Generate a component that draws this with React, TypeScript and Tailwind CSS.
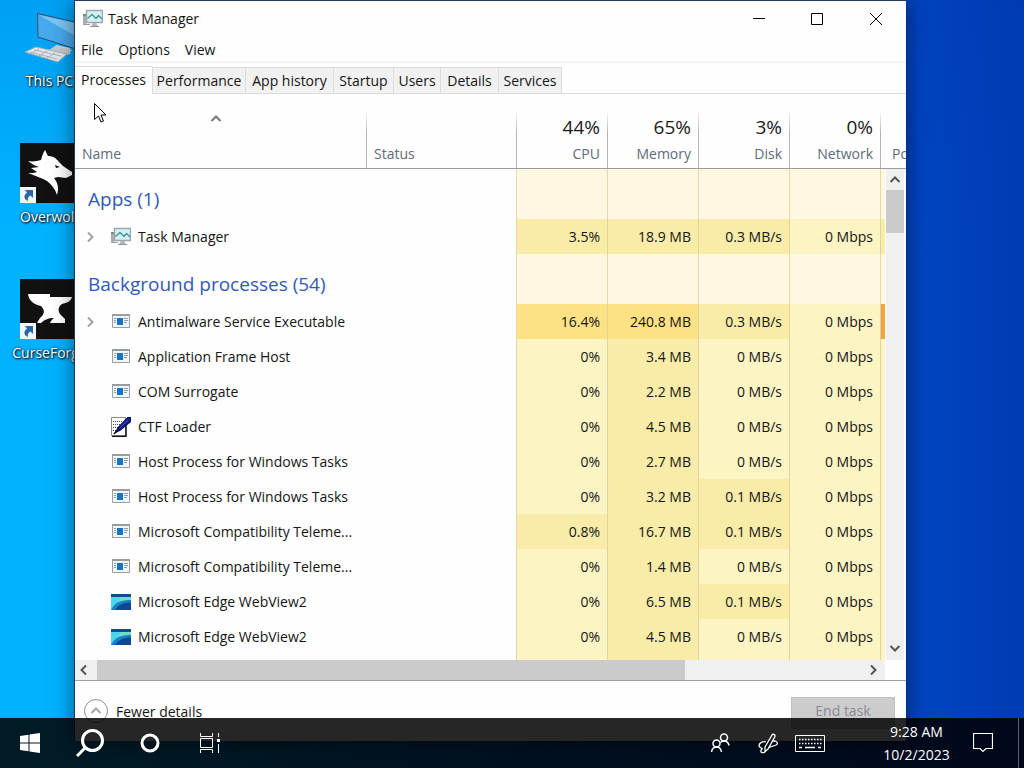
import { useState } from 'react'

type Tone = 'none' | 'low' | 'mid' | 'high' | 'max'
type IconName = 'taskmgr' | 'generic' | 'ctf' | 'edge'

const tones: Record<Tone, string> = {
  none: 'bg-[#fef8e3]',
  low: 'bg-[#fdf4c3]',
  mid: 'bg-[#f8eca8]',
  high: 'bg-[#fde185]',
  max: 'bg-[#f0a63c]',
}

type Process = {
  name: string
  icon: IconName
  expandable?: boolean
  values: [string, string, string, string]
  tones: [Tone, Tone, Tone, Tone, Tone]
}

const apps: Process[] = [
  { name: 'Task Manager', icon: 'taskmgr', expandable: true, values: ['3.5%', '18.9 MB', '0.3 MB/s', '0 Mbps'], tones: ['mid', 'mid', 'mid', 'low', 'mid'] },
]

const background: Process[] = [
  { name: 'Antimalware Service Executable', icon: 'generic', expandable: true, values: ['16.4%', '240.8 MB', '0.3 MB/s', '0 Mbps'], tones: ['high', 'high', 'mid', 'low', 'max'] },
  { name: 'Application Frame Host', icon: 'generic', values: ['0%', '3.4 MB', '0 MB/s', '0 Mbps'], tones: ['low', 'mid', 'low', 'low', 'low'] },
  { name: 'COM Surrogate', icon: 'generic', values: ['0%', '2.2 MB', '0 MB/s', '0 Mbps'], tones: ['low', 'mid', 'low', 'low', 'low'] },
  { name: 'CTF Loader', icon: 'ctf', values: ['0%', '4.5 MB', '0 MB/s', '0 Mbps'], tones: ['low', 'mid', 'low', 'low', 'low'] },
  { name: 'Host Process for Windows Tasks', icon: 'generic', values: ['0%', '2.7 MB', '0 MB/s', '0 Mbps'], tones: ['low', 'mid', 'low', 'low', 'low'] },
  { name: 'Host Process for Windows Tasks', icon: 'generic', values: ['0%', '3.2 MB', '0.1 MB/s', '0 Mbps'], tones: ['low', 'mid', 'mid', 'low', 'low'] },
  { name: 'Microsoft Compatibility Teleme...', icon: 'generic', values: ['0.8%', '16.7 MB', '0.1 MB/s', '0 Mbps'], tones: ['mid', 'mid', 'mid', 'low', 'low'] },
  { name: 'Microsoft Compatibility Teleme...', icon: 'generic', values: ['0%', '1.4 MB', '0 MB/s', '0 Mbps'], tones: ['low', 'mid', 'low', 'low', 'low'] },
  { name: 'Microsoft Edge WebView2', icon: 'edge', values: ['0%', '6.5 MB', '0.1 MB/s', '0 Mbps'], tones: ['low', 'mid', 'mid', 'low', 'low'] },
  { name: 'Microsoft Edge WebView2', icon: 'edge', values: ['0%', '4.5 MB', '0 MB/s', '0 Mbps'], tones: ['low', 'mid', 'low', 'low', 'low'] },
]

const tabs = [
  { label: 'Processes', width: 'w-[78px]' },
  { label: 'Performance', width: 'w-[93px]' },
  { label: 'App history', width: 'w-[88px]' },
  { label: 'Startup', width: 'w-[60px]' },
  { label: 'Users', width: 'w-[47px]' },
  { label: 'Details', width: 'w-[58px]' },
  { label: 'Services', width: 'w-[63px]' },
]

const metrics = [
  { label: 'CPU', total: '44%' },
  { label: 'Memory', total: '65%' },
  { label: 'Disk', total: '3%' },
  { label: 'Network', total: '0%' },
]

function TaskManagerIcon() {
  return (
    <svg width="20" height="20" viewBox="0 0 20 20" className="shrink-0">
      <path d="M0 5h3v11H0z" fill="#a9adb0" />
      <path d="M0 5h3v2H0z" fill="#6f8f78" />
      <path d="M1 15.500h6" stroke="#9a9ea1" />
      <path d="M3.500 1.500h16v12h-16z" fill="#d4f2f5" stroke="#a0a6aa" strokeWidth="1.500" />
      <path d="M4.500 9.500l4.500-4 4 4 2.500-3 3.500 3.500" fill="none" stroke="#3d9799" strokeWidth="1.300" />
      <path d="M9.500 14h4l1 3h-6z" fill="#b4b8ba" />
      <path d="M7 17.500h9" stroke="#8d9194" />
    </svg>
  )
}

function GenericIcon() {
  return (
    <svg width="20" height="20" viewBox="0 0 20 20" className="shrink-0">
      <path d="M1.500 2.500h17v13h-17z" fill="#f1f6fa" stroke="#9a9ea1" />
      <path d="M1 2h18v2H1z" fill="#999da0" />
      <path d="M6 6h6v7H6z" fill="#1673c5" />
      <path d="M3 6.500h2M3 8.500h2M3 10.500h2M13 6.500h4M13 8.500h4M13 10.500h3" stroke="#8e9ca8" />
    </svg>
  )
}

function CtfIcon() {
  return (
    <svg width="20" height="20" viewBox="0 0 20 20" className="shrink-0">
      <path d="M.5.5h14v18H.5z" fill="#fff" stroke="#8a8a8a" />
      <path d="M15 8v11.500H1" fill="none" stroke="#111" strokeWidth="1.500" />
      <path d="M2 4.500h10M2 7.500h9M2 10.500h6M2 13.500h3" stroke="#444" strokeDasharray="1 1" />
      <path d="M17 .500h2.500v4L9 13l-4 2 2-4z" fill="#14208f" stroke="#0b1268" strokeWidth="1.500" />
      <path d="M6 13.500L3 17" stroke="#111" strokeWidth="1.500" />
      <path d="M17 3l-8 7.500" stroke="#3f58cf" />
    </svg>
  )
}

function EdgeIcon() {
  return (
    <svg width="20" height="20" viewBox="0 0 20 20" className="shrink-0">
      <path d="M0 2h20v16H0z" fill="#4ad6ec" />
      <path d="M10 4h10v5c-5-1-9 0-13 2z" fill="#74dcc6" />
      <path d="M0 2h20v3H0z" fill="#0d4f8c" />
      <path d="M0 18C3 11 10 7.500 20 8v10z" fill="#1583c6" />
      <path d="M4 18c3-5 8-7.500 16-7.500V18z" fill="#0e4792" />
    </svg>
  )
}

const icons: Record<IconName, () => React.JSX.Element> = {
  taskmgr: TaskManagerIcon,
  generic: GenericIcon,
  ctf: CtfIcon,
  edge: EdgeIcon,
}

function Chevron({ dir, className = '' }: { dir: 'up' | 'down' | 'left' | 'right'; className?: string }) {
  const d = {
    up: 'M1.500 8l4.500-4.500L10.500 8',
    down: 'M1.500 4l4.500 4.500L10.500 4',
    left: 'M8 1.500L3.500 6 8 10.500',
    right: 'M4 1.500L8.500 6 4 10.500',
  }[dir]
  return (
    <svg width="12" height="12" viewBox="0 0 12 12" fill="none" stroke="currentColor" strokeWidth="2" className={className}>
      <path d={d} />
    </svg>
  )
}

function GroupRow({ label }: { label: string }) {
  return (
    <tr className="h-[50px]">
      <th scope="rowgroup" colSpan={2} className="border-r border-[#e3d9ad] pt-[10px] pb-0 pl-[13px] text-left text-[19px] leading-7 font-normal text-[#3159b8]">
        {label}
      </th>
      {metrics.map(m => (
        <td key={m.label} className={`border-r border-[#e3d9ad] ${tones.none}`} />
      ))}
      <td className={tones.none} />
    </tr>
  )
}

function ProcessRow({ process }: { process: Process }) {
  const Icon = icons[process.icon]
  return (
    <tr className="h-[35px]">
      <td className="p-0">
        <div className="flex items-center pl-[9px]">
          <span className="w-[27px]">
            {process.expandable && (
              <button aria-label={`Expand ${process.name}`} className="block text-[#a3a3a3]">
                <Chevron dir="right" />
              </button>
            )}
          </span>
          <Icon />
          <span className="pl-[7px] whitespace-nowrap">{process.name}</span>
        </div>
      </td>
      <td className="border-r border-[#e3d9ad]" />
      {process.values.map((v, i) => (
        <td key={i} className={`border-r border-[#dfd49c] p-0 pr-[7px] text-right ${tones[process.tones[i]]}`}>{v}</td>
      ))}
      <td className={tones[process.tones[4]]} />
    </tr>
  )
}

function ProcessTable() {
  const divider = 'relative p-0 align-bottom font-normal after:absolute after:right-0 after:bottom-0 after:h-[58px] after:w-px after:bg-linear-to-b after:from-transparent after:to-[#b5b5b5] after:to-40%'
  return (
    <div className="relative overflow-hidden">
      <table className="w-full table-fixed border-separate border-spacing-0">
        <colgroup>
          <col />
          <col className="w-[150px]" />
          <col className="w-[91px]" />
          <col className="w-[91px]" />
          <col className="w-[91px]" />
          <col className="w-[91px]" />
          <col className="w-[25px]" />
        </colgroup>
        <thead>
          <tr className="h-[75px] text-[#5f6b78] [&>th]:border-b [&>th]:border-[#9d9d9d]">
            <th scope="col" className={`${divider} text-left`}>
              <span className="mb-[19px] flex justify-center pr-[10px] text-[#777]"><Chevron dir="up" /></span>
              <span className="block pb-1 pl-[7px] leading-5">Name</span>
            </th>
            <th scope="col" className={`${divider} text-left`}>
              <span className="block pb-1 pl-[7px] leading-5">Status</span>
            </th>
            {metrics.map(m => (
              <th key={m.label} scope="col" className={`${divider} text-right`}>
                <span className="block pr-2 pb-[3px] text-[19px] leading-7 text-[#1b1b1b]">{m.total}</span>
                <span className="block pr-2 pb-1 leading-5">{m.label}</span>
              </th>
            ))}
            <th scope="col" className="overflow-hidden p-0 align-bottom font-normal">
              <span className="block pb-1 pl-[11px] text-left leading-5 whitespace-nowrap">Power usage</span>
            </th>
          </tr>
        </thead>
        <tbody>
          <GroupRow label="Apps (1)" />
          {apps.map((p, i) => <ProcessRow key={i} process={p} />)}
          <GroupRow label="Background processes (54)" />
          {background.map((p, i) => <ProcessRow key={i} process={p} />)}
          {/* top edge of the next row */}
          <tr aria-hidden="true" className="h-[6px]">
            <td colSpan={2} className="border-r border-[#e3d9ad] p-0" />
            {metrics.map((m, i) => (
              <td key={m.label} className={`border-r border-[#dfd49c] p-0 ${i === 1 ? tones.mid : tones.low}`} />
            ))}
            <td className={`p-0 ${tones.low}`} />
          </tr>
        </tbody>
      </table>

      {/* vertical scrollbar */}
      <div className="absolute top-[75px] right-0 bottom-0 flex w-[21px] flex-col border-r-2 border-l border-[#fdfdfd] bg-[#f0f0f0] text-[#555]">
        <button aria-label="Scroll up" className="flex h-[21px] items-center justify-center"><Chevron dir="up" /></button>
        <div className="h-[43px] bg-[#cbcbcb]" />
        <button aria-label="Scroll down" className="mt-auto flex h-[25px] items-center justify-center"><Chevron dir="down" /></button>
      </div>
    </div>
  )
}

function TaskManager() {
  const [tab, setTab] = useState('Processes')
  return (
    <section className="absolute top-0 right-[118px] bottom-[27px] left-[74px] flex flex-col overflow-hidden border-t border-l border-[#22395c] bg-[#fefefe] shadow-[0_2px_20px_rgba(0,0,0,0.5)]">
      <header className="flex h-[36px] shrink-0 items-center pl-2">
        <TaskManagerIcon />
        <h1 className="flex-1 pl-[5px]">Task Manager</h1>
        <button aria-label="Minimize" className="flex h-full w-[58px] items-center justify-center">
          <svg width="12" height="12" stroke="#000"><path d="M0 5.500h12" /></svg>
        </button>
        <button aria-label="Maximize" className="flex h-full w-[58px] items-center justify-center">
          <svg width="12" height="12" fill="none" stroke="#000"><path d="M.5.5h11v11H.5z" /></svg>
        </button>
        <button aria-label="Close" className="flex h-full w-[60px] items-center justify-center">
          <svg width="12" height="12" stroke="#000"><path d="M0 0l12 12M12 0L0 12" /></svg>
        </button>
      </header>
      <nav className="flex h-[26px] shrink-0 items-center gap-[15px] border-b-2 border-[#f4f4f4] pt-[2px] pl-[6px]">
        <button>File</button>
        <button>Options</button>
        <button>View</button>
      </nav>

      <div role="tablist" className="flex h-[31px] shrink-0 items-end border-b border-[#dcdcdc]">
        {tabs.map(t => (
          <button
            key={t.label}
            role="tab"
            aria-selected={t.label === tab}
            onClick={() => setTab(t.label)}
            className={`border-t border-r border-[#dcdcdc] whitespace-nowrap ${t.width} ${t.label === tab ? '-mb-px h-7 bg-[#fefefe] pb-[2px]' : 'h-[26px] bg-[#f1f1f1] pt-px'}`}
          >
            {t.label}
          </button>
        ))}
      </div>

      <ProcessTable />

      {/* horizontal scrollbar */}
      <div className="flex h-[21px] shrink-0 border-b border-[#a0a0a0] pr-[21px] text-[#555]">
        <div className="flex flex-1 bg-[#f0f0f0]">
          <button aria-label="Scroll left" className="flex w-[22px] items-center justify-center pr-1"><Chevron dir="left" /></button>
          <div className="w-3/4 max-w-[588px] bg-[#cbcbcb]" />
          <button aria-label="Scroll right" className="ml-auto flex w-6 items-center justify-center"><Chevron dir="right" /></button>
        </div>
      </div>

      <footer className="flex items-start justify-between pt-4 pr-[11px] pl-[9px]">
        <button className="flex items-center gap-2">
          <span className="mt-[2px] flex size-6 items-center justify-center rounded-full border border-[#8f8f8f] text-[#a5a5a5]">
            <Chevron dir="up" />
          </span>
          <span className="pt-1">Fewer details</span>
        </button>
        <button disabled className="h-8 w-[104px] border border-[#bfbfbf] bg-[#cccccc] pb-1 text-[#8b8b93]">End task</button>
      </footer>
    </section>
  )
}

function ShortcutArrow() {
  return (
    <svg width="16" height="16" viewBox="0 0 16 16" className="absolute bottom-0 left-0 bg-[#f2f6fa]">
      <path d="M5 3h8v8l-2.500-2.500C8 10 7.500 11 8 14c-4-1.500-5-5.500-1-8.500z" fill="#2c65ad" />
    </svg>
  )
}

function DesktopIcons() {
  const link = 'flex h-[136px] flex-col items-center gap-1 text-white [text-shadow:1px_1px_2px_#000,0_0_3px_rgba(0,0,0,0.8)]'
  return (
    <nav aria-label="Desktop" className="w-[99px] pt-[7px] leading-5">
      <a href="#pc" className={link}>
        <svg width="60" height="60" viewBox="0 0 60 60">
          <path d="M17.500 6.500L59 16v27L18 30z" fill="#48a9ec" stroke="#31516f" />
          <path d="M19 8l40 9v14z" fill="#7cc6f6" />
          <path d="M36 38l14 3v6l-18-4z" fill="#d5dadd" />
          <path d="M29 43l6-4 17 4-4 5z" fill="#c3cacf" />
          <path d="M5 45l11-5 31 7-9 8z" fill="#e3e7ea" stroke="#a5adb4" />
          <path d="M10 45l27 7M14 43l27 6M19 42l-8 5M27 44l-8 5M35 46l-8 5" stroke="#a9b1b8" />
        </svg>
        This PC
      </a>
      <a href="#overwolf" className={link}>
        <span className="relative block size-[60px] bg-[#111]">
          <svg width="60" height="60" viewBox="0 0 60 60" fill="#fff">
            <path d="M25 7l3 6c5 0 8 2 11 6l4 4 9 6v3l-6 3-8-1-4 1c4 5 5 10 3 17-2-6-5-10-10-14-5-3-9-4-19-8 4 0 7 0 9-1l-6-4 8-1c-4-1-7-3-11-6 5 1 9 0 13-1 1-4 2-7 4-10z" />
            <path d="M35 22l5 2-4 1z" fill="#111" />
          </svg>
          <ShortcutArrow />
        </span>
        Overwolf
      </a>
      <a href="#curseforge" className={link}>
        <span className="relative block size-[60px] bg-[#111]">
          <svg width="60" height="60" viewBox="0 0 60 60" fill="#fff">
            <path d="M8 15h22v3h22c-1 4-5 6-10 7-5 3-4 9 0 12l3 3v4H30c1-2 2-4 4-5-6 0-10 2-13 5h-4l3-5c5-4 5-8 1-12-5-1-9-3-12-8z" />
          </svg>
          <ShortcutArrow />
        </span>
        CurseForge
      </a>
    </nav>
  )
}

function Taskbar() {
  return (
    <footer className="absolute inset-x-0 bottom-0 flex h-[50px] bg-black/85 text-white">
      <button aria-label="Start" className="flex w-[60px] items-center justify-center">
        <svg width="20" height="20" viewBox="0 0 20 20" fill="#fff">
          <path d="M0 3l8.500-1.300v7.800H0zM9.500 1.500L20 0v9.500H9.500zM0 10.500h8.500v7.800L0 17zM9.500 10.500H20V20L9.500 18.500z" />
        </svg>
      </button>
      <button aria-label="Search" className="flex w-[60px] items-center justify-center">
        <svg width="28" height="28" viewBox="0 0 28 28" fill="none" stroke="#fff" strokeWidth="3">
          <circle cx="16.500" cy="11.500" r="10" />
          <path d="M9.500 18.500L1 27" />
        </svg>
      </button>
      <button aria-label="Cortana" className="flex w-[60px] items-center justify-center">
        <svg width="20" height="20" fill="none" stroke="#fff" strokeWidth="3"><circle cx="10" cy="10" r="8" /></svg>
      </button>
      <button aria-label="Task View" className="flex w-[60px] items-center justify-center">
        <svg width="20" height="20" viewBox="0 0 20 20" fill="none" stroke="#fff">
          <path d="M.5 0v3.500h12V0M.5 5.500h12v9H.5zM.5 20v-3.500h12V20M18.500 0v4M18.500 11v9" />
          <path d="M17 6h3v3h-3z" fill="#fff" stroke="none" />
        </svg>
      </button>

      <div className="ml-auto flex">
        <button aria-label="People" className="flex w-12 items-center justify-center">
          <svg width="20" height="20" viewBox="0 0 20 20" fill="none" stroke="#fff" strokeWidth="1.500">
            <circle cx="14" cy="4.500" r="3.500" />
            <circle cx="6.500" cy="10.500" r="3.500" />
            <path d="M1.500 19c.5-3 2-5 5-5s4.500 2 5 5M10.500 9.500c1-1 2-1.500 3.500-1.500 3 0 4.500 2 5 4.500" />
          </svg>
        </button>
        <button aria-label="Windows Ink" className="flex w-12 items-center justify-center">
          <svg width="22" height="22" viewBox="0 0 22 22" fill="none" stroke="#fff" strokeWidth="1.300">
            <path d="M8 15L15 3c.7-1.500 3.500-.5 3 1.500L11 17l-3 2.500z" />
            <path d="M9 10c-3-1-7 1-7 3.500S6 16 5 17s-2 3 0 3.500 3-.5 3-1M12 15.500l7-2.500c2-1 2-3-1-4h-2" />
          </svg>
        </button>
        <button aria-label="Touch keyboard" className="mr-[52px] flex w-9 items-center justify-center">
          <svg width="30" height="17" viewBox="0 0 30 17" fill="none" stroke="#fff">
            <path d="M.5.5h29v16H.5z" />
            <path d="M4 4.500h23M4 8.500h23" strokeWidth="1.500" strokeDasharray="1.500 1.500" />
            <path d="M4 12.500h3M10 12.500h10M23 12.500h3" strokeWidth="1.500" />
          </svg>
        </button>
        <button className="w-[73px] pb-px text-center leading-[23px]">
          <span className="block">9:28 AM</span>
          <span className="block">10/2/2023</span>
        </button>
        <button aria-label="Notifications" className="flex w-[60px] items-center justify-center">
          <svg width="20" height="20" viewBox="0 0 20 20" fill="none" stroke="#fff" strokeWidth="1.200">
            <path d="M.5.500h19v15h-6.500L10 18.500 7 15.500H.5z" />
          </svg>
        </button>
        <button aria-label="Show desktop" className="ml-[5px] w-[6px] border-l border-[#5a6070]" />
      </div>
    </footer>
  )
}

export default function App() {
  return (
    <main className="relative h-screen min-h-[768px] overflow-hidden bg-[linear-gradient(to_bottom,rgba(0,50,170,0.14),transparent_30%),linear-gradient(to_right,#00b2ff_8%,#0070dc_50%,#0045c2_89%,#003cb3)] font-['Open_Sans','Noto_Sans',sans-serif] text-sm text-[#151515]">
      <DesktopIcons />
      <TaskManager />
      <Taskbar />
      <svg width="13" height="20" viewBox="0 0 13 20" className="absolute top-[103px] left-[94px]">
        <path d="M.5.500v16l4-3.500 2.500 6 2.500-1-2.500-6h5z" fill="#fff" stroke="#000" />
      </svg>
    </main>
  )
}
